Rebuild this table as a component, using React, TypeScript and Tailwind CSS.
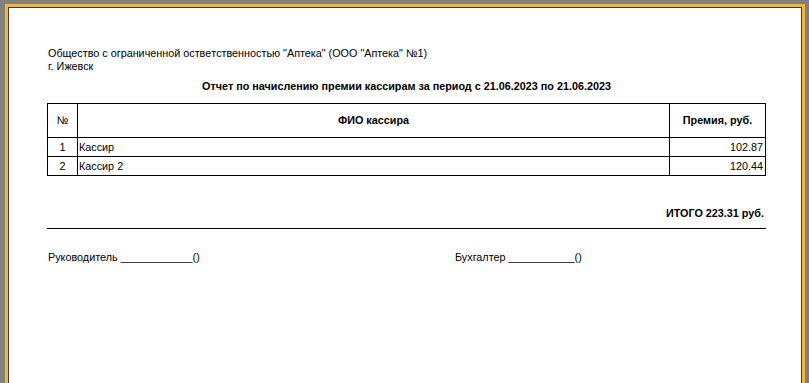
export default function App() {
  return (
    <div className="h-[383px] w-[809px] overflow-hidden bg-[#808080] pl-[5px] pr-[4px] pt-[4px] font-['Liberation_Sans',Arial,sans-serif] text-[10.8px] leading-[13px] text-black">
      <div className="h-[420px] border-[3px] border-[#f8b533]">
        <div className="h-full border border-[#3c3c3c] bg-white pl-[38px] pr-[35px] pt-[39px]">
          <div className="pl-[1px]">Общество с ограниченной оствeтственностью "Аптека" (ООО "Аптека" №1)</div>
          <div className="pl-[1px]">г. Ижевск</div>
          <div className="mt-[7px] w-[719px] text-center font-bold">
            Отчет по начислению премии кассирам за период с 21.06.2023 по 21.06.2023
          </div>

          <table className="mt-[10px] w-[719px] border-collapse">
            <thead>
              <tr className="h-[34px]">
                <th className="w-[30px] border border-black font-normal">№</th>
                <th className="border border-black font-bold">ФИО кассира</th>
                <th className="w-[96px] border border-black font-bold">Премия, руб.</th>
              </tr>
            </thead>
            <tbody>
              <tr className="h-[19px]">
                <td className="border border-black text-center">1</td>
                <td className="border border-black pl-[1px]">Кассир</td>
                <td className="border border-black pr-[2px] text-right">102.87</td>
              </tr>
              <tr className="h-[19px]">
                <td className="border border-black text-center">2</td>
                <td className="border border-black pl-[1px]">Кассир 2</td>
                <td className="border border-black pr-[2px] text-right">120.44</td>
              </tr>
            </tbody>
          </table>

          <div className="mt-[31px] w-[719px] pr-[2px] text-right font-bold">ИТОГО 223.31 руб.</div>
          <div className="mt-[8px] w-[719px] border-t border-black" />

          <div className="mt-[22px] flex w-[719px] pl-[1px]">
            <div className="w-[407px]">Руководитель ____________()</div>
            <div>Бухгалтер ___________()</div>
          </div>
        </div>
      </div>
    </div>
  );
}
